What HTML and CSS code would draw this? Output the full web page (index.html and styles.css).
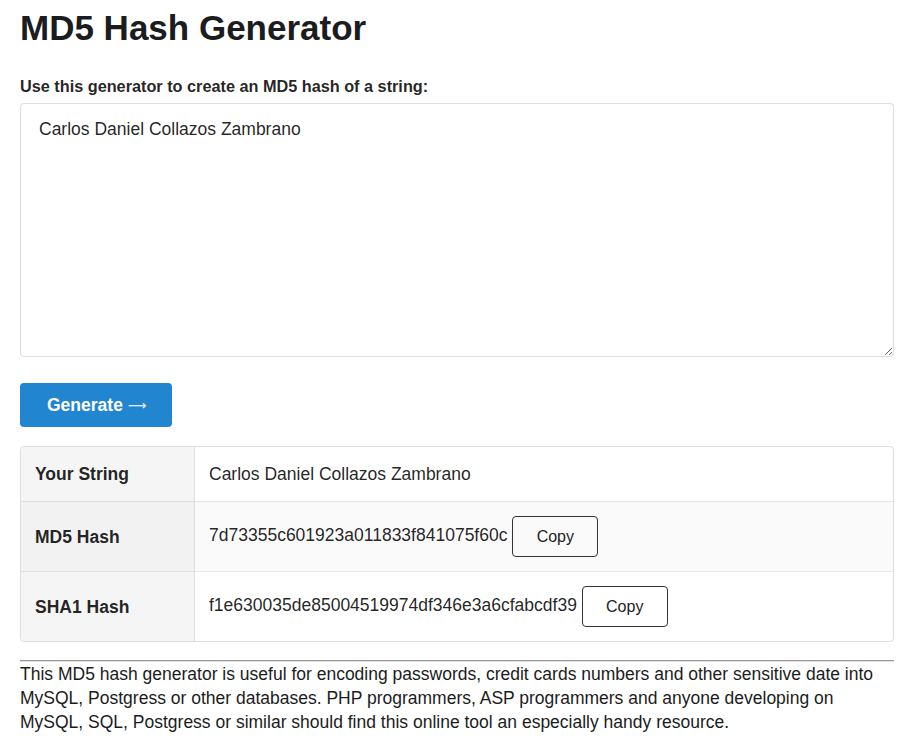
FILE: index.html
```html
<!DOCTYPE html>
<html>
<head>
<meta charset="utf-8">
<link rel="stylesheet" href="styles.css">
</head>
<body>
<div class="page">
  <h1 class="title">MD5 Hash Generator</h1>
  <form class="form">
    <label class="label" for="str">Use this generator to create an MD5 hash of a string:</label>
    <textarea id="str" class="input">Carlos Daniel Collazos Zambrano</textarea>
    <button type="button" class="generate">Generate <span class="arrow">&#x27F6;</span></button>
  </form>
  <table class="results">
    <tbody>
      <tr class="row">
        <th class="key">Your String</th>
        <td class="val">Carlos Daniel Collazos Zambrano</td>
      </tr>
      <tr class="row alt">
        <th class="key">MD5 Hash</th>
        <td class="val">7d73355c601923a011833f841075f60c <button type="button" class="copy">Copy</button></td>
      </tr>
      <tr class="row">
        <th class="key">SHA1 Hash</th>
        <td class="val">f1e630035de85004519974df346e3a6cfabcdf39 <button type="button" class="copy">Copy</button></td>
      </tr>
    </tbody>
  </table>
  <hr class="rule">
  <p class="about">This MD5 hash generator is useful for encoding passwords, credit cards numbers and other sensitive date into MySQL, Postgress or other databases. PHP programmers, ASP programmers and anyone developing on MySQL, SQL, Postgress or similar should find this online tool an especially handy resource.</p>
</div>
</body>
</html>
```
FILE: styles.css
```css
html, body {
  margin: 0;
  padding: 0;
  background: #fff;
}
body {
  font-family: "Liberation Sans", Arial, sans-serif;
  font-size: 17.5px;
  color: rgba(0, 0, 0, 0.87);
}
.page {
  width: 874px;
  margin-left: 20px;
  padding-top: 5px;
}
.title {
  margin: 0;
  font-size: 35px;
  line-height: 45px;
  font-weight: bold;
  color: #1b1c1d;
}
.form {
  display: flex;
  flex-direction: column;
  align-items: flex-start;
  margin-top: 26px;
}
.label {
  font-size: 16.25px;
  font-weight: bold;
  line-height: 20px;
  color: rgba(0, 0, 0, 0.87);
  margin-bottom: 7px;
}
.input {
  box-sizing: border-box;
  width: 100%;
  height: 254px;
  margin: 0;
  padding: 13px 18px;
  font-family: inherit;
  font-size: 17.5px;
  line-height: 24px;
  color: rgba(0, 0, 0, 0.87);
  border: 1px solid rgba(34, 36, 38, 0.15);
  border-radius: 4px;
  resize: vertical;
  outline: none;
}
.generate {
  margin-top: 26px;
  height: 44px;
  padding: 0 26px 0 27px;
  background: #2185d0;
  color: #fff;
  border: none;
  border-radius: 4px;
  font-family: inherit;
  font-size: 17.5px;
  font-weight: bold;
  cursor: pointer;
}
.arrow {
  font-family: "DejaVu Sans", sans-serif;
  font-weight: normal;
  font-size: 13px;
  vertical-align: 1px;
}
.results {
  width: 100%;
  margin-top: 19px;
  border: 1px solid rgba(34, 36, 38, 0.15);
  border-radius: 4px;
  border-collapse: separate;
  border-spacing: 0;
}
.key {
  width: 145px;
  text-align: left;
  font-weight: bold;
  padding: 15px 14px;
  background: #f5f5f5;
  border-right: 1px solid rgba(34, 36, 38, 0.1);
  line-height: 24px;
}
.val {
  padding: 15px 14px;
  line-height: 24px;
}
.row + .row .key,
.row + .row .val {
  border-top: 1px solid rgba(34, 36, 38, 0.1);
}
.row.alt .val {
  background: #fafafa;
}
.row.alt .key {
  background: #f2f2f2;
}
.row:first-child .key { border-top-left-radius: 4px; }
.row:last-child .key { border-bottom-left-radius: 4px; }
.copy {
  box-sizing: border-box;
  width: 86px;
  height: 41px;
  margin: -1px 0;
  background: transparent;
  border: 1px solid #333;
  border-radius: 4px;
  font-family: inherit;
  font-size: 16px;
  color: #222;
  vertical-align: middle;
  cursor: pointer;
}
.rule {
  margin: 18px 0 0;
  border: 0;
  border-top: 1px solid #999;
  border-bottom: 1px solid #e0e0e0;
}
.about {
  margin: 0;
  font-size: 17.5px;
  line-height: 24px;
  color: #1b1c1d;
}
```
